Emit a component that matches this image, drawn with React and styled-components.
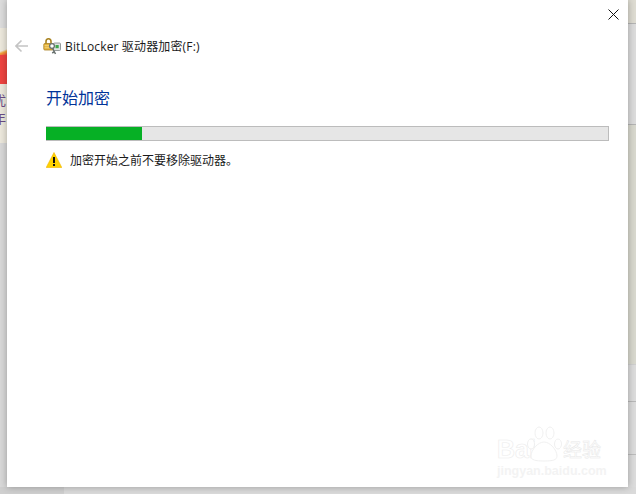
import React from 'react'
import styled, { createGlobalStyle } from 'styled-components'

const GlobalStyle = createGlobalStyle`
    html, body {
        margin: 0;
        padding: 0;
        background: #dcdcdc;
    }
    body {
        font-family: "Open Sans", "Noto Sans CJK SC", sans-serif;
    }
`

const Page = styled.div`
    position: relative;
    width: 636px;
    height: 494px;
    overflow: hidden;
    display: grid;
    grid-template-columns: 7px 621px 8px;
    grid-template-rows: 487px 7px;
`

// blurred desktop behind the dialog
const Strip = styled.div`
    display: flex;
    flex-direction: column;
    overflow: hidden;
`

const Band = styled.div`
    height: ${p => p.$h}px;
    flex: ${p => (p.$h ? 'none' : 1)};
    background: ${p => p.$bg};
    border-bottom: ${p => (p.$line ? `1px solid ${p.$line}` : 'none')};
    box-sizing: border-box;
`

const Promo = styled.div`
    height: 115px;
    flex: none;
    background: #ece8dc;
    display: flex;
    flex-direction: column;
    overflow: hidden;
`

const PromoGap = styled.div`
    height: ${p => p.$h}px;
    flex: none;
`

const PromoFlame = styled.div`
    height: 7px;
    flex: none;
    background: linear-gradient(160deg, #ece8dc 35%, #f2a53a 60%, #ee4a3c 100%);
`

const PromoRed = styled.div`
    height: 29px;
    flex: none;
    background: #ee4440;
`

const PromoText = styled.div`
    height: 18px;
    flex: none;
    margin-left: -7px;
    font-size: 13px;
    line-height: 18px;
    color: #6a4c86;
    font-family: "Noto Sans CJK SC", sans-serif;
`

const BottomStrip = styled.div`
    grid-column: 1 / 4;
    display: flex;
`

const BottomPart = styled.div`
    width: ${p => (p.$w ? `${p.$w}px` : 'auto')};
    flex: ${p => (p.$w ? 'none' : 1)};
    background: ${p => p.$bg};
`

const Dialog = styled.div`
    position: relative;
    z-index: 1;
    background: #fff;
    box-shadow: 0 0 7px rgba(0, 0, 0, 0.3);
    display: flex;
    flex-direction: column;
`

const CloseBar = styled.div`
    height: 38px;
    display: flex;
    justify-content: flex-end;
    padding: 9px 9px 0 0;
    box-sizing: border-box;
`

const IconButton = styled.button`
    border: none;
    background: none;
    padding: 0;
    width: ${p => p.$size}px;
    height: ${p => p.$size}px;
    display: block;
    svg {
        display: block;
    }
`

const TitleRow = styled.div`
    height: 16px;
    display: flex;
    align-items: center;
    margin-left: 8px;
`

const LockIcon = styled.svg`
    margin-left: 14px;
    margin-right: 4px;
    flex: none;
`

const Title = styled.div`
    font-size: 12px;
    color: #1a1a1a;
    white-space: nowrap;
    letter-spacing: 0.15px;
`

const Content = styled.div`
    padding: 0 19px 0 39px;
    display: flex;
    flex-direction: column;
`

const Heading = styled.h1`
    margin: 31px 0 0;
    font-size: 16px;
    font-weight: 400;
    line-height: 24px;
    color: #003399;
    font-family: "Noto Sans CJK SC", sans-serif;
`

const Progress = styled.div`
    margin-top: 17px;
    height: 15px;
    background: #e6e6e6;
    border: 1px solid #bcbcbc;
    border-left: none;
    box-sizing: border-box;
    display: flex;
`

const ProgressFill = styled.div`
    background: #06b025;
`

const WarningRow = styled.div`
    margin-top: 10px;
    display: flex;
    align-items: center;
    gap: 8px;
    height: 17px;
`

const WarningText = styled.div`
    font-size: 12px;
    color: #1a1a1a;
    font-family: "Noto Sans CJK SC", sans-serif;
`

// baidu watermark sits over the dialog
const Watermark = styled.div`
    position: absolute;
    z-index: 2;
    left: 497px;
    top: 424px;
    width: 110px;
    height: 58px;
    pointer-events: none;
`

const MarkTop = styled.div`
    display: flex;
    align-items: center;
    height: 40px;
`

const MarkBai = styled.span`
    font-family: "Liberation Sans", sans-serif;
    font-size: 25px;
    font-weight: 700;
    color: #fff;
    -webkit-text-stroke: 0.6px #ececec;
    width: 29px;
    margin-top: 10px;
`

const MarkCn = styled.span`
    font-family: "Noto Sans CJK SC", sans-serif;
    font-size: 19px;
    color: #fff;
    -webkit-text-stroke: 0.5px #e8e8e8;
    margin-left: 1px;
    margin-top: 8px;
    white-space: nowrap;
`

const MarkUrl = styled.div`
    font-family: "Liberation Sans", sans-serif;
    font-size: 12.5px;
    font-weight: 700;
    color: #f3f3f3;
    white-space: nowrap;
`

export default function App() {
    return (
        <>
            <GlobalStyle />
            <Page>
                <Strip>
                    <Band $h={28} $bg="#dcdcdc" />
                    <Promo>
                        <PromoGap $h={20} />
                        <PromoFlame />
                        <PromoRed />
                        <PromoGap $h={7} />
                        <PromoText>优</PromoText>
                        <PromoText>年</PromoText>
                    </Promo>
                    <Band $bg="#d8d8d8" />
                </Strip>

                <Dialog>
                    <CloseBar>
                        <IconButton $size={11}>
                            <svg width="11" height="11" viewBox="0 0 11 11">
                                <path d="M0.5 0.5L10.5 10.5M10.5 0.5L0.5 10.5" stroke="#111" strokeWidth="1" fill="none" />
                            </svg>
                        </IconButton>
                    </CloseBar>
                    <TitleRow>
                        <IconButton $size={14}>
                            <svg width="14" height="14" viewBox="0 0 14 14">
                                <path d="M1.5 7H13M6.5 1.5L1 7L6.5 12.5" stroke="#c4c4c4" strokeWidth="1.6" fill="none" />
                            </svg>
                        </IconButton>
                        <LockIcon width="18" height="17" viewBox="0 0 18 17">
                            <path d="M3 6V3.5C3 1.8 4.2 0.8 5.5 0.8S8 1.8 8 3.5V6" stroke="#a8821f" strokeWidth="1.6" fill="none" />
                            <rect x="0.8" y="5.5" width="9.4" height="6.5" rx="1" fill="#e3b23a" stroke="#a88224" strokeWidth="0.8" />
                            <path d="M1.5 7.7H9.5M1.5 9.8H9.5" stroke="#f7dd90" strokeWidth="0.8" />
                            <rect x="10.5" y="5" width="7" height="7.5" rx="1" fill="#dfe3e3" stroke="#7d8585" strokeWidth="0.8" />
                            <rect x="12.5" y="7" width="3.2" height="3.2" fill="#3ea64a" />
                            <circle cx="9" cy="8" r="2.4" fill="#fff" stroke="#69726f" strokeWidth="1.3" />
                            <path d="M9.6 10.4L12.5 16M11.4 13.6L9.2 15" stroke="#69726f" strokeWidth="1.5" fill="none" />
                        </LockIcon>
                        <Title>BitLocker 驱动器加密(F:)</Title>
                    </TitleRow>
                    <Content>
                        <Heading>开始加密</Heading>
                        <Progress>
                            <ProgressFill style={{ width: `${(96 / 563) * 100}%` }} />
                        </Progress>
                        <WarningRow>
                            <svg width="16" height="16" viewBox="0 0 16 16">
                                <path d="M8 0.5L15.8 15.5H0.2Z" fill="#ffd200" stroke="#f0b400" strokeWidth="0.6" />
                                <rect x="7" y="5" width="2" height="6" fill="#111" />
                                <rect x="7" y="12" width="2" height="2" fill="#111" />
                            </svg>
                            <WarningText>加密开始之前不要移除驱动器。</WarningText>
                        </WarningRow>
                    </Content>
                </Dialog>

                <Strip>
                    <Band $h={24} $bg="#dedcd2" $line="#b4b4b4" />
                    <Band $h={101} $bg="#dcdcdc" $line="#b4b4b4" />
                    <Band $h={240} $bg="#d8d8ce" $line="#cfcfcf" />
                    <Band $h={37} $bg="#dcdcdc" $line="#b8b8b8" />
                    <Band $h={53} $bg="#dcdcdc" $line="#bcbcbc" />
                    <Band $bg="#dcdcdc" />
                </Strip>

                <BottomStrip>
                    <BottomPart $w={64} $bg="#cfcfcf" />
                    <BottomPart $bg="#dadada" />
                </BottomStrip>

                <Watermark>
                    <MarkTop>
                        <MarkBai>Bai</MarkBai>
                        <svg width="36" height="38" viewBox="0 0 36 38">
                            <g fill="#fff" stroke="#ececec" strokeWidth="0.8">
                                <ellipse cx="5" cy="19" rx="3.5" ry="5" />
                                <ellipse cx="13" cy="8" rx="4" ry="6" />
                                <ellipse cx="24" cy="8" rx="4" ry="6" />
                                <ellipse cx="32" cy="19" rx="3.5" ry="5" />
                                <path d="M18 17C12 17 5 25 5 31C5 35 9 36 18 36S31 35 31 31C31 25 24 17 18 17Z" />
                            </g>
                        </svg>
                        <MarkCn>经验</MarkCn>
                    </MarkTop>
                    <MarkUrl>jingyan.baidu.com</MarkUrl>
                </Watermark>
            </Page>
        </>
    )
}
